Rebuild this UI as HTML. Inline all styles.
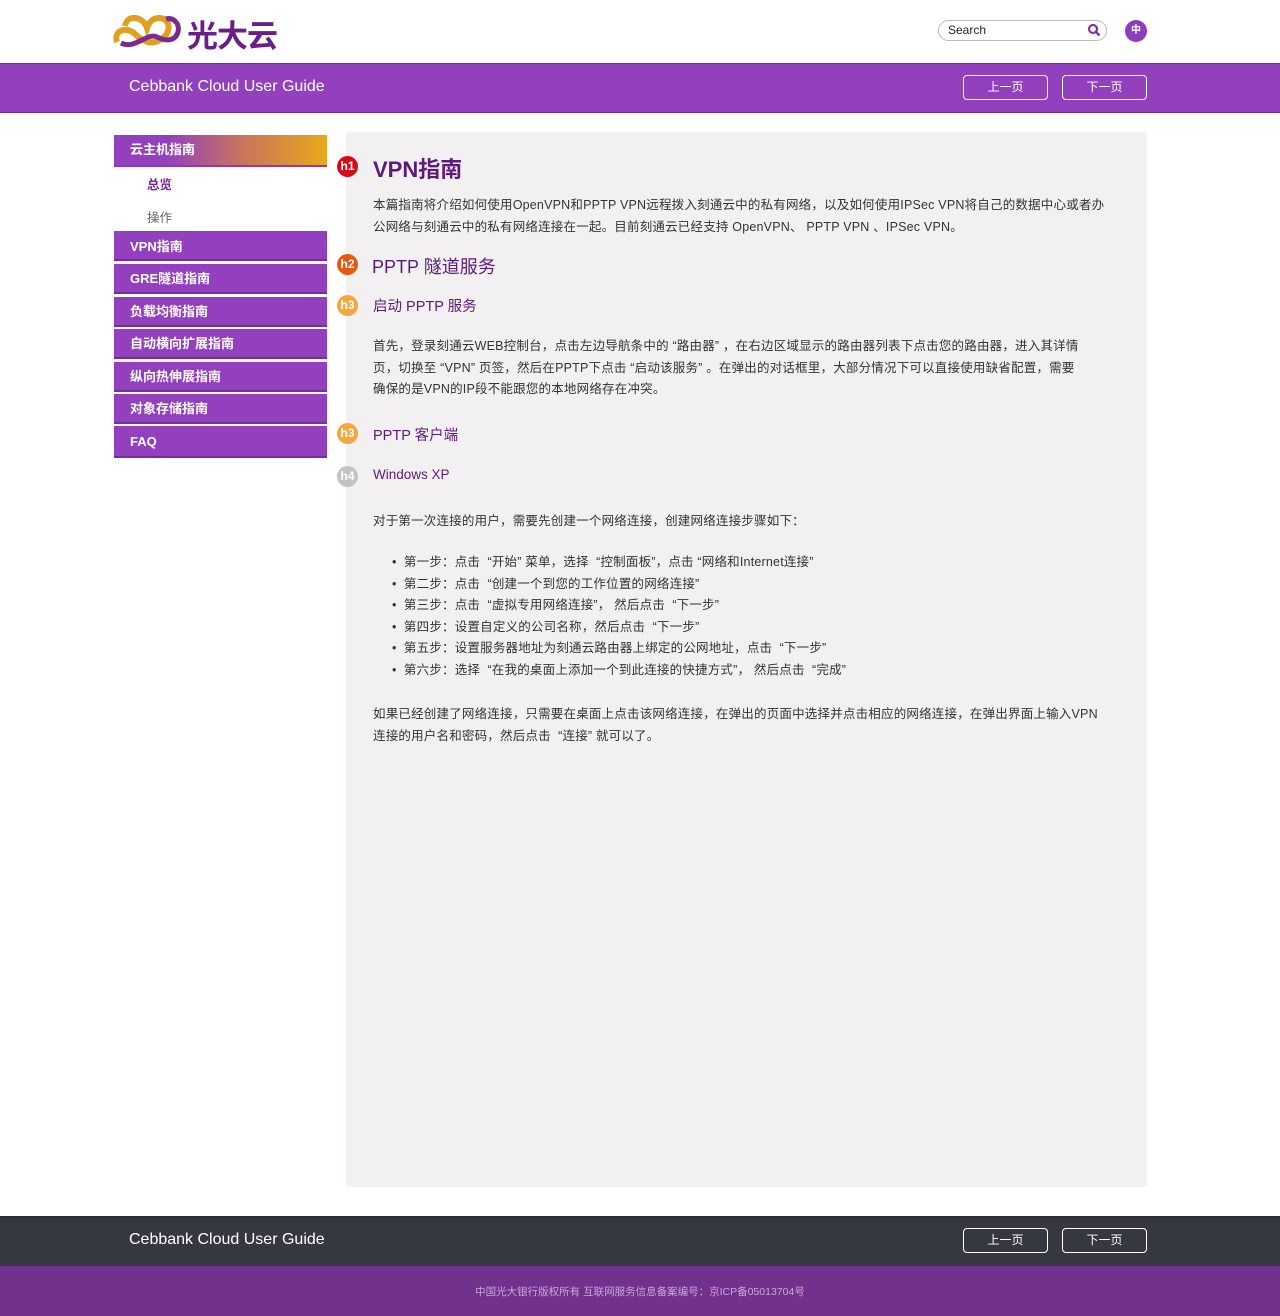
<!DOCTYPE html>
<html><head><meta charset="utf-8"><style>
*{margin:0;padding:0;box-sizing:border-box}
body{width:1280px;height:1316px;position:relative;background:#fff;font-family:"Liberation Sans","Noto Sans CJK SC",sans-serif;overflow:hidden}
.a{position:absolute;white-space:nowrap}
.bar{position:absolute;left:0;width:1280px}
.btn{position:absolute;width:85px;height:25px;border:1px solid #fff;border-radius:4px;color:#fff;font-size:12px;text-align:center;line-height:23px}
.nav{position:absolute;left:114px;width:213px;height:30px;background:#9340bf;border-bottom:2px solid #7a2aa3;color:#fff;font-size:13px;font-weight:bold;line-height:29px;padding-left:16px}
.t{position:absolute;left:373px;font-size:12.5px;color:#333;white-space:nowrap;letter-spacing:0.2px}
.badge{position:absolute;left:337px;width:21px;height:21px;border-radius:50%;color:#fff;font-size:12px;font-weight:bold;text-align:center;line-height:21px}
.h{position:absolute;color:#5c1a7c;white-space:nowrap}
</style></head><body>
<svg class="a" style="left:113px;top:12px" width="70" height="38" viewBox="0 0 70 38">
<path d="M4 30 C0 18 14 14 22 22 C30 30 40 34 50 26 C58 20 58 6 46 6 C40 6 36 10 34 16 C30 4 14 2 12 14" fill="none" stroke="#e0a020" stroke-width="6"/>
<path d="M8 31 C22 38 34 20 44 25 C52 29 62 30 65 20 C67 11 60 5 53 7" fill="none" stroke="#7a2b8e" stroke-width="5"/>
</svg>
<div class="a" style="left:187px;top:11px;font-size:31px;font-weight:bold;color:#6b1f86;letter-spacing:-1px">光大云</div>
<div class="a" style="left:938px;top:20px;width:169px;height:21px;border:1px solid #bbb;border-radius:11px;font-size:12px;line-height:19px;padding-left:9px;color:#222">Search</div>
<svg class="a" style="left:1087px;top:23px" width="14" height="14" viewBox="0 0 14 14"><circle cx="6" cy="6" r="4" fill="none" stroke="#8a2fb0" stroke-width="2.2"/><path d="M9 9 L12.5 12.5" stroke="#8a2fb0" stroke-width="2.5"/></svg>
<div class="a" style="left:1125px;top:20px;width:22px;height:22px;border-radius:50%;background:#8e3cbd;color:#fff;font-size:10px;font-weight:bold;text-align:center;line-height:22px">中</div>
<div class="bar" style="top:63px;height:50px;background:#9340bf;border-top:1px solid #7a2aa3;border-bottom:1px solid #7a2aa3"></div>
<div class="a" style="left:129px;top:78px;font-size:16px;color:#fff">Cebbank Cloud User Guide</div>
<div class="btn" style="left:963px;top:75px">上一页</div>
<div class="btn" style="left:1062px;top:75px">下一页</div>

<div class="nav" style="top:135px;height:32px;background:linear-gradient(90deg,#9340bf 0%,#9340bf 25%,#c8745c 60%,#e8a81a 100%);border-bottom:2px solid #8a3ab3;line-height:30px">云主机指南</div>
<div class="a" style="left:147px;top:174px;font-size:12.5px;color:#7a22a3;font-weight:bold">总览</div>
<div class="a" style="left:147px;top:207px;font-size:12.5px;color:#666">操作</div>
<div class="nav" style="top:231px;line-height:31px">VPN指南</div>
<div class="nav" style="top:264px">GRE隧道指南</div>
<div class="nav" style="top:297px">负载均衡指南</div>
<div class="nav" style="top:329px">自动横向扩展指南</div>
<div class="nav" style="top:362px">纵向热伸展指南</div>
<div class="nav" style="top:394px">对象存储指南</div>
<div class="nav" style="top:426px;height:32px;line-height:31px">FAQ</div>

<div class="a" style="left:346px;top:132px;width:801px;height:1055px;background:#f2f0f1;border-radius:3px"></div>
<div class="badge" style="top:156px;background:#d80c18">h1</div>
<div class="h" style="left:373px;top:152px;font-size:22px;font-weight:bold">VPN指南</div>
<div class="t" style="top:194px;line-height:22px">本篇指南将介绍如何使用OpenVPN和PPTP VPN远程拨入刻通云中的私有网络，以及如何使用IPSec VPN将自己的数据中心或者办<br>公网络与刻通云中的私有网络连接在一起。目前刻通云已经支持 OpenVPN、 PPTP VPN 、IPSec VPN。</div>
<div class="badge" style="top:254px;background:#e8580c">h2</div>
<div class="h" style="left:372px;top:253px;font-size:18px">PPTP 隧道服务</div>
<div class="badge" style="top:295px;background:#f5a83a">h3</div>
<div class="h" style="left:373px;top:295px;font-size:14.5px">启动 PPTP 服务</div>
<div class="t" style="top:336px;line-height:21.5px">首先，登录刻通云WEB控制台，点击左边导航条中的 “路由器” ，在右边区域显示的路由器列表下点击您的路由器，进入其详情<br>页，切换至 “VPN” 页签，然后在PPTP下点击 “启动该服务” 。在弹出的对话框里，大部分情况下可以直接使用缺省配置，需要<br>确保的是VPN的IP段不能跟您的本地网络存在冲突。</div>
<div class="badge" style="top:423px;background:#f5a83a">h3</div>
<div class="h" style="left:373px;top:424px;font-size:14.5px">PPTP 客户端</div>
<div class="badge" style="top:466px;background:#c4c2c3">h4</div>
<div class="h" style="left:373px;top:467px;font-size:13.5px">Windows XP</div>
<div class="t" style="top:510px">对于第一次连接的用户，需要先创建一个网络连接，创建网络连接步骤如下：</div>
<div class="t" style="top:552px;left:392px;line-height:21.6px">•&nbsp; 第一步：点击 &nbsp;“开始” 菜单，选择 &nbsp;“控制面板”，点击 “网络和Internet连接”<br>•&nbsp; 第二步：点击 &nbsp;“创建一个到您的工作位置的网络连接”<br>•&nbsp; 第三步：点击 &nbsp;“虚拟专用网络连接”， 然后点击 &nbsp;“下一步”<br>•&nbsp; 第四步：设置自定义的公司名称，然后点击 &nbsp;“下一步”<br>•&nbsp; 第五步：设置服务器地址为刻通云路由器上绑定的公网地址，点击 &nbsp;“下一步”<br>•&nbsp; 第六步：选择 &nbsp;“在我的桌面上添加一个到此连接的快捷方式”， 然后点击 &nbsp;“完成”</div>
<div class="t" style="top:703px;line-height:22px">如果已经创建了网络连接，只需要在桌面上点击该网络连接，在弹出的页面中选择并点击相应的网络连接，在弹出界面上输入VPN<br>连接的用户名和密码，然后点击 &nbsp;“连接” 就可以了。</div>

<div class="bar" style="top:1216px;height:50px;background:#353840;border-top:2px solid #2a2c32"></div>
<div class="a" style="left:129px;top:1231px;font-size:16px;color:#fff">Cebbank Cloud User Guide</div>
<div class="btn" style="left:963px;top:1228px">上一页</div>
<div class="btn" style="left:1062px;top:1228px">下一页</div>
<div class="bar" style="top:1266px;height:50px;background:#72318d"></div>
<div class="a" style="left:0;width:1280px;text-align:center;top:1284px;font-size:10.5px;color:#c8a8d6">中国光大银行版权所有 互联网服务信息备案编号：京ICP备05013704号</div>
</body></html>
